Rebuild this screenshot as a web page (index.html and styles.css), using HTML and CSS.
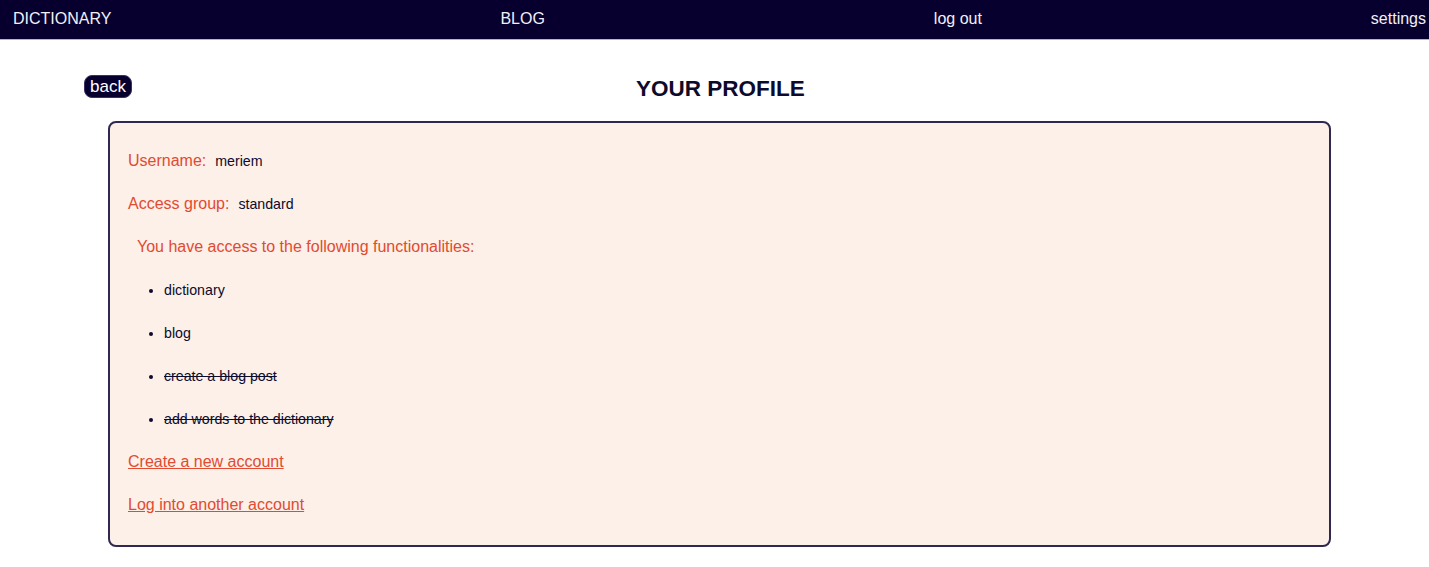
FILE: index.html
```html
<!DOCTYPE html>
<html>
<head>
<meta charset="utf-8">
<link rel="stylesheet" href="styles.css">
</head>
<body>
<nav class="topnav">
  <a class="nav-link">DICTIONARY</a>
  <a class="nav-link">BLOG</a>
  <a class="nav-link">log out</a>
  <a class="nav-link">settings</a>
</nav>
<header class="page-head">
  <div class="head-left"><button class="back-btn">back</button></div>
  <h1 class="page-title">YOUR PROFILE</h1>
  <div></div>
</header>
<section class="card">
  <div class="row"><span class="label">Username:</span><span class="value">meriem</span></div>
  <div class="row"><span class="label">Access group:</span><span class="value">standard</span></div>
  <div class="row intro"><span class="label">You have access to the following functionalities:</span></div>
  <ul class="func-list">
    <li class="row">dictionary</li>
    <li class="row">blog</li>
    <li class="row off">create a blog post</li>
    <li class="row off">add words to the dictionary</li>
  </ul>
  <div class="row"><a class="link">Create a new account</a></div>
  <div class="row"><a class="link">Log into another account</a></div>
</section>
</body>
</html>
```

FILE: styles.css
```css
* { box-sizing: border-box; }
body {
  margin: 0;
  font-family: "Liberation Sans", Arial, sans-serif;
  background: #ffffff;
  color: #0d0a2b;
}
.topnav {
  height: 40px;
  background: #07002e;
  border-bottom: 1px solid #b7b3c8;
  display: flex;
  justify-content: space-between;
  align-items: center;
  padding: 0 3px 2px 13px;
}
.nav-link {
  color: #f2f0f7;
  font-size: 16px;
  text-decoration: none;
}
.page-head {
  display: grid;
  grid-template-columns: 1fr auto 1fr;
  align-items: center;
  padding: 35px 72px 19px 84px;
}
.head-left { display: flex; align-items: center; padding-bottom: 4px; }
.back-btn {
  background: #07002e;
  color: #ffffff;
  border: 1px solid #3a3160;
  border-radius: 8px;
  font-family: "Liberation Sans", Arial, sans-serif;
  font-size: 17px;
  line-height: 20px;
  padding: 0 5px;
  height: 23px;
}
.page-title {
  margin: 0;
  font-size: 22.5px;
  line-height: 24px;
  font-weight: bold;
  color: #0d0a2b;
}
.card {
  height: 426px;
  margin: 0 98px 0 108px;
  border: 2px solid #2f2850;
  border-radius: 8px;
  background: #fcf0e8;
  padding: 28px 18px 0 18px;
  display: flex;
  flex-direction: column;
  gap: 23px;
}
.row {
  height: 20px;
  line-height: 20px;
  font-size: 14.2px;
  color: #0d0a2b;
}
.label {
  color: #e24a31;
  font-size: 16px;
  margin-right: 9px;
}
.intro { padding-left: 9px; }
.func-list {
  margin: 0;
  padding: 0 0 0 36px;
  display: flex;
  flex-direction: column;
  gap: 23px;
}
.off { text-decoration: line-through; }
.link {
  color: #e24a31;
  font-size: 16px;
  text-decoration: underline;
}
```
